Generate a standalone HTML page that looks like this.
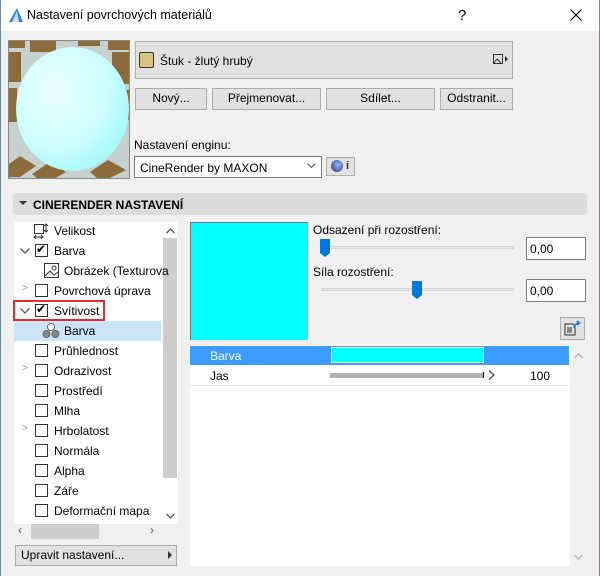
<!DOCTYPE html>
<html><head><meta charset="utf-8"><style>
*{box-sizing:border-box;margin:0;padding:0}
body{width:600px;height:576px;overflow:hidden;background:#f0f0f0;font-family:"Liberation Sans",sans-serif;font-size:12px;color:#000;position:relative}
.a{position:absolute}
.btn{position:absolute;background:#e1e1e1;border:1px solid #adadad;text-align:center;line-height:19px;font-size:12px}
.cb{position:absolute;width:13px;height:13px;border:1px solid #333;background:#fff}
.t{position:absolute;font-size:12px;white-space:nowrap}
.chev{position:absolute;font-size:10px;color:#999}
</style></head><body>
<div class="a" style="left:0;top:0;width:600px;height:31px;background:#fff"></div>
<div class="a" style="left:0;top:0;width:1px;height:576px;background:#6f8bb0"></div>
<div class="a" style="left:599px;top:0;width:1px;height:576px;background:#6f8bb0"></div>
<svg class="a" style="left:8px;top:7px" width="16" height="16"><path d="M1 15 L9 1 L15 15 Z" fill="#2f7fe0"/><path d="M4 15 L9 4 L11 15 Z" fill="#bfe0ff"/></svg>
<div class="t" style="left:27px;top:8px;font-size:12.5px">Nastavení povrchových materiálů</div>
<div class="t" style="left:458px;top:7px;font-size:15px">?</div>
<svg class="a" style="left:570px;top:9px" width="12" height="12"><path d="M0.5 0.5 L11.5 11.5 M11.5 0.5 L0.5 11.5" stroke="#000" stroke-width="1.1"/></svg>

<!-- preview -->
<svg class="a" style="left:8px;top:40px" width="122" height="139">
<rect width="122" height="139" fill="#c5d0cf"/>
<g fill="#8c6a3a">
<rect x="1" y="0" width="16" height="8"/><rect x="22" y="0" width="26" height="12"/><rect x="70" y="0" width="22" height="6"/><rect x="100" y="0" width="22" height="10"/>
<rect x="1" y="12" width="12" height="30"/><rect x="104" y="12" width="18" height="32"/>
<rect x="1" y="48" width="8" height="34"/><rect x="112" y="50" width="10" height="30"/>
<path d="M0 125 L12 116 L28 126 L12 137 L0 137Z"/><path d="M24 134 L42 122 L58 132 L46 139 L30 139Z"/><path d="M82 132 L100 120 L118 130 L100 139 L90 139Z"/>
</g>
<defs><radialGradient id="g" cx="0.35" cy="0.35" r="0.75"><stop offset="0" stop-color="#ecffff"/><stop offset="0.6" stop-color="#cdfcfd"/><stop offset="1" stop-color="#9ef9fc"/></radialGradient></defs>
<ellipse cx="64.5" cy="69" rx="56.5" ry="62" fill="url(#g)"/>
<rect x="0.5" y="0.5" width="121" height="138" fill="none" stroke="#888"/>
</svg>

<div class="a" style="left:135px;top:41px;width:378px;height:38px;background:#e1e1e1;border:1px solid #adadad"></div>
<div class="a" style="left:139px;top:52px;width:15px;height:16px;background:#d8c27f;border:1px solid #333;border-radius:2px"></div>
<div class="t" style="left:160px;top:54px">Štuk - žlutý hrubý</div>
<svg class="a" style="left:493px;top:54px" width="16" height="12"><rect x="0.5" y="0.5" width="9" height="9" fill="none" stroke="#333"/><path d="M1 9 L4 5 L8 9" fill="none" stroke="#333"/><path d="M12 2 L15 5 L12 8Z" fill="#333"/></svg>

<div class="btn" style="left:135px;top:88px;width:72px;height:22px">Nový...</div>
<div class="btn" style="left:212px;top:88px;width:109px;height:22px">Přejmenovat...</div>
<div class="btn" style="left:326px;top:88px;width:109px;height:22px">Sdílet...</div>
<div class="btn" style="left:440px;top:88px;width:73px;height:22px">Odstranit...</div>

<div class="t" style="left:134px;top:138px">Nastavení enginu:</div>
<div class="a" style="left:134px;top:156px;width:188px;height:22px;background:#fff;border:1px solid #7a7a7a"></div>
<div class="t" style="left:140px;top:161px">CineRender by MAXON</div>
<svg class="a" style="left:307px;top:163px" width="9" height="6"><path d="M0.5 0.5 L4.5 4.5 L8.5 0.5" fill="none" stroke="#555"/></svg>
<div class="a" style="left:326px;top:157px;width:29px;height:19px;background:#e1e1e1;border:1px solid #adadad"></div>
<div class="a" style="left:331px;top:160px;width:12px;height:12px;border-radius:50%;background:radial-gradient(circle at 60% 40%,#9ab6ff,#1d2f6b)"></div>
<div class="t" style="left:346px;top:160px;font-weight:bold;font-size:11px;color:#333">i</div>

<div class="a" style="left:13px;top:193px;width:574px;height:22px;background:#dcdcdc;border-radius:3px"></div>
<svg class="a" style="left:19px;top:201px" width="8" height="5"><path d="M0 0 L8 0 L4 4Z" fill="#333"/></svg>
<div class="t" style="left:33px;top:198px;font-weight:bold">CINERENDER NASTAVENÍ</div>

<!-- tree -->
<div class="a" style="left:14px;top:222px;width:148px;height:302px;background:#fff"></div>
<div class="a" style="left:162px;top:222px;width:16px;height:302px;background:#fff"></div>
<div class="a" style="left:163px;top:238px;width:14px;height:240px;background:#cdcdcd"></div>
<svg class="a" style="left:166px;top:228px" width="9" height="6"><path d="M0.5 5 L4.5 1 L8.5 5" fill="none" stroke="#555" stroke-width="1.3"/></svg>
<svg class="a" style="left:166px;top:513px" width="9" height="6"><path d="M0.5 1 L4.5 5 L8.5 1" fill="none" stroke="#555" stroke-width="1.3"/></svg>
<div class="a" style="left:14px;top:524px;width:164px;height:16px;background:#f0f0f0"></div>
<div class="a" style="left:31px;top:524px;width:68px;height:15px;background:#cdcdcd"></div>
<div class="t" style="left:18px;top:523px;color:#555">‹</div>
<div class="t" style="left:150px;top:523px;color:#555">›</div>
<div class="a" style="left:14px;top:321px;width:147px;height:20px;background:#cce4f7"></div>

<svg class="a" style="left:33px;top:223px" width="16" height="16"><rect x="1.5" y="1.5" width="9" height="9" fill="none" stroke="#333"/><path d="M13 1 V9 M11 3 L13 1 L15 3 M11 7 L13 9 L15 7 M1 14 H10 M3 12 L1 14 L3 16 M8 12 L10 14 L8 16" fill="none" stroke="#333"/></svg>
<div class="t" style="left:54px;top:224px">Velikost</div>

<svg class="a" style="left:20px;top:248px" width="10" height="6"><path d="M0.5 0.5 L5 5 L9.5 0.5" fill="none" stroke="#555" stroke-width="1.3"/></svg>
<div class="cb" style="left:35px;top:244px"></div><div class="t" style="left:36px;top:242px;font-size:12px">✔</div>
<div class="t" style="left:54px;top:244px">Barva</div>

<svg class="a" style="left:44px;top:263px" width="16" height="16"><rect x="0.5" y="0.5" width="14" height="14" fill="#fff" stroke="#333"/><circle cx="10" cy="5" r="2" fill="none" stroke="#333"/><path d="M1 13 L6 8 L10 12 L14 9" fill="none" stroke="#333"/></svg>
<div class="t" style="left:64px;top:264px">Obrázek (Texturova</div>

<div class="chev" style="left:22px;top:283px">&gt;</div>
<div class="cb" style="left:35px;top:284px"></div><div class="t" style="left:54px;top:284px">Povrchová úprava</div>

<div class="a" style="left:13px;top:300px;width:92px;height:21px;border:2px solid #e52b2b"></div>
<svg class="a" style="left:20px;top:308px" width="10" height="6"><path d="M0.5 0.5 L5 5 L9.5 0.5" fill="none" stroke="#555" stroke-width="1.3"/></svg>
<div class="cb" style="left:35px;top:304px"></div><div class="t" style="left:36px;top:302px">✔</div>
<div class="t" style="left:54px;top:304px">Svítivost</div>

<svg class="a" style="left:42px;top:323px" width="18" height="16"><circle cx="9" cy="4" r="3.5" fill="#fff" stroke="#666"/><circle cx="4.5" cy="11" r="3.5" fill="#888" stroke="#666"/><circle cx="13.5" cy="11" r="3.5" fill="#888" stroke="#666"/></svg>
<div class="t" style="left:64px;top:324px">Barva</div>

<div class="cb" style="left:35px;top:344px"></div><div class="t" style="left:54px;top:344px">Průhlednost</div>
<div class="chev" style="left:22px;top:363px">&gt;</div>
<div class="cb" style="left:35px;top:364px"></div><div class="t" style="left:54px;top:364px">Odrazivost</div>
<div class="cb" style="left:35px;top:384px"></div><div class="t" style="left:54px;top:384px">Prostředí</div>
<div class="cb" style="left:35px;top:404px"></div><div class="t" style="left:54px;top:404px">Mlha</div>
<div class="chev" style="left:22px;top:423px">&gt;</div>
<div class="cb" style="left:35px;top:424px"></div><div class="t" style="left:54px;top:424px">Hrbolatost</div>
<div class="cb" style="left:35px;top:444px"></div><div class="t" style="left:54px;top:444px">Normála</div>
<div class="cb" style="left:35px;top:464px"></div><div class="t" style="left:54px;top:464px">Alpha</div>
<div class="cb" style="left:35px;top:484px"></div><div class="t" style="left:54px;top:484px">Záře</div>
<div class="cb" style="left:35px;top:504px"></div><div class="t" style="left:54px;top:504px">Deformační mapa</div>

<div class="a" style="left:15px;top:545px;width:162px;height:21px;background:#e1e1e1;border:1px solid #adadad"></div>
<div class="t" style="left:21px;top:548px">Upravit nastavení...</div>
<svg class="a" style="left:168px;top:551px" width="5" height="8"><path d="M0 0 L4 4 L0 8Z" fill="#333"/></svg>

<!-- right -->
<div class="a" style="left:190px;top:222px;width:119px;height:119px;background:#00ffff;border:1px solid #777;border-right-color:#fff;border-bottom-color:#fff"></div>
<div class="t" style="left:313px;top:223px">Odsazení při rozostření:</div>
<div class="a" style="left:321px;top:246px;width:193px;height:3px;background:#e7e7e7;border:1px solid #d6d6d6"></div>
<svg class="a" style="left:320px;top:239px" width="11" height="19"><path d="M0 0 H10 V14 L5 18 L0 14Z" fill="#0078d7"/></svg>
<div class="a" style="left:526px;top:237px;width:60px;height:23px;background:#fff;border:1px solid #7a7a7a"></div>
<div class="t" style="left:530px;top:242px">0,00</div>
<div class="t" style="left:313px;top:265px">Síla rozostření:</div>
<div class="a" style="left:321px;top:288px;width:193px;height:3px;background:#e7e7e7;border:1px solid #d6d6d6"></div>
<svg class="a" style="left:412px;top:281px" width="11" height="19"><path d="M0 0 H10 V14 L5 18 L0 14Z" fill="#0078d7"/></svg>
<div class="a" style="left:526px;top:279px;width:60px;height:23px;background:#fff;border:1px solid #7a7a7a"></div>
<div class="t" style="left:530px;top:284px">0,00</div>
<div class="a" style="left:560px;top:317px;width:25px;height:23px;background:#e1e1e1;border:1px solid #adadad"></div>
<svg class="a" style="left:564px;top:320px" width="18" height="17"><path d="M1 4 H9 L11 6 V15 H1Z" fill="none" stroke="#333"/><path d="M3 8 H8 M3 10 H8 M3 12 H8" stroke="#333"/><path d="M10 8 Q11 3 15 3 M13 1 L15.5 3 L13 5" fill="none" stroke="#1f7ce0" stroke-width="1.6"/></svg>

<div class="a" style="left:190px;top:345px;width:380px;height:221px;background:#fff"></div>
<div class="a" style="left:190px;top:346px;width:379px;height:19px;background:#3d9bff"></div>
<div class="t" style="left:210px;top:349px;color:#fff">Barva</div>
<div class="a" style="left:331px;top:347px;width:153px;height:16px;background:#00ffff;border:1px solid #fff"></div>
<div class="t" style="left:210px;top:369px">Jas</div>
<div class="a" style="left:330px;top:373px;width:153px;height:5px;background:#b0b0b0"></div>
<div class="a" style="left:483px;top:372px;width:1px;height:6px;background:#000"></div>
<svg class="a" style="left:488px;top:370px" width="8" height="10"><path d="M1 0.5 L6 5 L1 9.5 M3 0.5" fill="none" stroke="#444" stroke-width="1.2"/></svg>
<div class="t" style="left:530px;top:369px">100</div>
<div class="a" style="left:190px;top:385px;width:379px;height:1px;background:#e8e8e8"></div>
<div class="a" style="left:570px;top:345px;width:17px;height:221px;background:#f0f0f0"></div>
<svg class="a" style="left:574px;top:353px" width="9" height="6"><path d="M0.5 5 L4.5 1 L8.5 5" fill="none" stroke="#bbb" stroke-width="1.5"/></svg>
<svg class="a" style="left:574px;top:554px" width="9" height="6"><path d="M0.5 1 L4.5 5 L8.5 1" fill="none" stroke="#bbb" stroke-width="1.5"/></svg>
</body></html>
